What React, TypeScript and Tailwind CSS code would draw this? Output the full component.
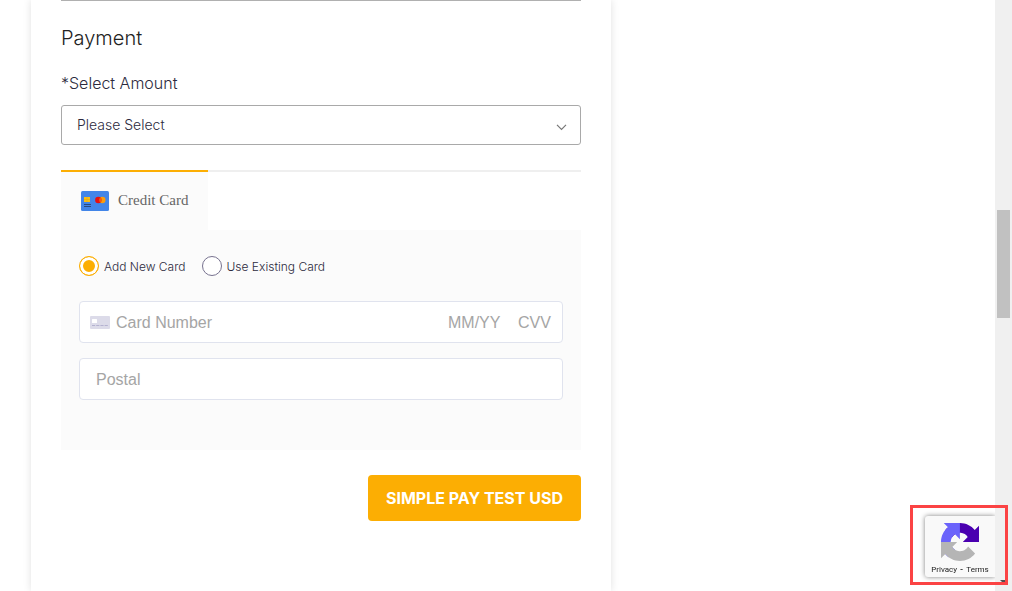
import { useState } from "react";

function CreditCardIcon() {
  return (
    <svg width="28" height="20" viewBox="0 0 28 20" aria-hidden="true">
      <rect width="28" height="20" rx="1.5" fill="#4285e8" />
      <rect x="3" y="6" width="6" height="5" fill="#fbbf14" />
      <path d="M3 8.5h6M6 6v5" stroke="#e2a50c" strokeWidth="0.5" />
      <path d="M3 13.5h7M3 15.5h7" stroke="#2c4a7c" strokeWidth="1" />
      <circle cx="21.3" cy="9" r="3.2" fill="#fb9d0b" />
      <circle cx="17.3" cy="9" r="3.2" fill="#e6100f" />
      <path d="M19.3 6.5a3.2 3.2 0 0 1 0 5a3.2 3.2 0 0 1 0-5z" fill="#f3600a" />
    </svg>
  );
}

function BlankCardIcon() {
  return (
    <svg width="20" height="13" viewBox="0 0 20 13" className="shrink-0" aria-hidden="true">
      <rect width="20" height="13" rx="1" fill="#dcdbe9" />
      <rect x="2" y="3" width="5" height="4" rx="0.5" fill="#fff" />
      <path d="M2 9.5h16" stroke="#b4b2d0" strokeWidth="1" strokeDasharray="3.2 1" />
    </svg>
  );
}

function RecaptchaLogo() {
  return (
    <svg width="38" height="38" viewBox="0 0 64 64" aria-hidden="true">
      <path
        fill="#4a00b0"
        d="M64 31.955l-.033-1.37V4.687l-7.16 7.16C50.948 4.674 42.033.093 32.05.093c-10.4 0-19.622 4.96-25.458 12.64l11.736 11.86a15.55 15.55 0 0 1 4.754-5.334c2.05-1.6 4.952-2.906 8.968-2.906.485 0 .86.057 1.135.163 4.976.393 9.288 3.14 11.828 7.124l-8.307 8.307L64 31.953"
      />
      <path
        fill="#6b63fb"
        d="M31.862.094l-1.37.033H4.594l7.16 7.16C4.58 13.147 0 22.06 0 32.046c0 10.4 4.96 19.622 12.64 25.458L24.5 45.768a15.55 15.55 0 0 1-5.334-4.754c-1.6-2.05-2.906-4.952-2.906-8.968 0-.485.057-.86.163-1.135.393-4.976 3.14-9.288 7.124-11.828l8.307 8.307L31.86.095"
      />
      <path
        fill="#b5b5b5"
        d="M.001 32.045l.033 1.37v25.898l7.16-7.16c5.86 7.173 14.774 11.754 24.76 11.754 10.4 0 19.622-4.96 25.458-12.64l-11.736-11.86a15.55 15.55 0 0 1-4.754 5.334c-2.05 1.6-4.952 2.906-8.968 2.906-.485 0-.86-.057-1.135-.163-4.976-.393-9.288-3.14-11.828-7.124l8.307-8.307c-10.522.04-22.4.066-27.295-.005"
      />
    </svg>
  );
}

const radioClass =
  "size-5 shrink-0 appearance-none rounded-full border border-[#77728f] bg-white checked:border-[#fcae03] checked:bg-[#fcae03] checked:shadow-[inset_0_0_0_3px_#ffffff]";

export default function App() {
  const [mode, setMode] = useState("new");

  return (
    <div className="flex min-h-screen bg-white font-['Inter',sans-serif] text-[#2c2a3d]">
      <main className="flex-1 pl-[31px]">
        <form
          className="min-h-screen max-w-[580px] bg-white px-[30px] shadow-[0_0_8px_rgba(0,0,0,0.12)]"
          onSubmit={(e) => e.preventDefault()}
        >
          <div className="h-px bg-[#b0b0b0]" />
          <h2 className="mt-[22px] text-xl leading-[30px] font-light text-[#222222]">Payment</h2>
          <label htmlFor="amount" className="mt-[18px] block text-base leading-6 font-light">
            *Select Amount
          </label>
          <div className="relative mt-[10px]">
            <select
              id="amount"
              className="h-10 w-full appearance-none rounded-[3px] border border-[#a9a9a9] bg-white px-[15px] text-sm font-light"
            >
              <option>Please Select</option>
            </select>
            <svg
              className="pointer-events-none absolute top-[19px] right-[14px]"
              width="11"
              height="7"
              viewBox="0 0 11 7"
              fill="none"
              aria-hidden="true"
            >
              <path d="M1 0.8l4.5 4.5l4.5-4.5" stroke="#777" strokeWidth="1.2" />
            </svg>
          </div>

          <div className="mt-[25px] flex">
            <button
              type="button"
              className="flex h-[60px] items-center gap-[9px] border-t-2 border-[#fcae03] bg-[#fbfbfb] px-5 font-['Liberation_Serif',serif] text-[15px] text-[#666666]"
            >
              <CreditCardIcon />
              <span className="pb-[2px]">Credit Card</span>
            </button>
            <div className="flex-1 border-t-2 border-[#efefef]" />
          </div>

          <div className="bg-[#fbfbfb] px-[18px] pt-[26px] pb-[50px]">
            <div className="flex gap-4 text-xs leading-[18px] font-light">
              <label className="flex items-center gap-[5px]">
                <input
                  type="radio"
                  name="card"
                  className={radioClass}
                  checked={mode === "new"}
                  onChange={() => setMode("new")}
                />
                <span className="pt-[2px]">Add New Card</span>
              </label>
              <label className="flex items-center gap-[5px]">
                <input
                  type="radio"
                  name="card"
                  className={radioClass}
                  checked={mode === "existing"}
                  onChange={() => setMode("existing")}
                />
                <span className="pt-[2px]">Use Existing Card</span>
              </label>
            </div>
            <div className="mt-[25px] flex h-[42px] items-center rounded border border-[#e0e3ee] bg-white pr-[9px] pl-[10px] font-['Liberation_Sans',sans-serif] text-base">
              <BlankCardIcon />
              <input
                aria-label="Card Number"
                placeholder="Card Number"
                className="ml-[6px] min-w-0 flex-1 pt-[2px] outline-none placeholder:text-[#a5a5a5]"
              />
              <input
                aria-label="Expiry date"
                placeholder="MM/YY"
                className="w-[70px] pt-[2px] outline-none placeholder:text-[#a5a5a5]"
              />
              <input
                aria-label="Security code"
                placeholder="CVV"
                className="w-[35px] pt-[2px] outline-none placeholder:text-[#a5a5a5]"
              />
            </div>
            <input
              aria-label="Postal"
              placeholder="Postal"
              className="mt-[15px] block h-[42px] w-full rounded border border-[#e0e3ee] bg-white px-4 pt-[2px] font-['Liberation_Sans',sans-serif] text-base outline-none placeholder:text-[#a5a5a5]"
            />
          </div>

          <div className="mt-[25px] flex justify-end">
            <button
              type="submit"
              className="h-[46px] rounded bg-[#fcae03] px-[18px] text-base font-bold text-white"
            >
              SIMPLE PAY TEST USD
            </button>
          </div>
        </form>
      </main>

      <div className="w-[17px] bg-[#f0f0f0] px-[2px] pt-[210px]">
        <div className="h-[108px] w-[13px] bg-[#c1c1c1]" />
      </div>

      <aside className="fixed right-1 bottom-[6px] h-20 w-[98px] border-[3px] border-[#fb4344]">
        <div className="flex h-full overflow-hidden pr-[10px]">
          <div className="flex-1 overflow-hidden pt-2 pl-3">
            <div className="flex h-[61px] flex-col items-center rounded-l-[3px] bg-[#f9f9f9] pt-[7px] shadow-[0_0_5px_#808080]">
              <RecaptchaLogo />
              <div className="mt-[3px] flex gap-[3px] font-['Roboto',sans-serif] text-[8px] leading-3 text-[#222222]">
                <a href="#privacy">Privacy</a>
                <span className="font-bold">-</span>
                <a href="#terms">Terms</a>
              </div>
            </div>
          </div>
        </div>
        <svg className="absolute right-0 bottom-0" width="5" height="2" viewBox="0 0 5 2" aria-hidden="true">
          <path d="M0 0h5v2H2z" fill="#505050" />
        </svg>
      </aside>
    </div>
  );
}
